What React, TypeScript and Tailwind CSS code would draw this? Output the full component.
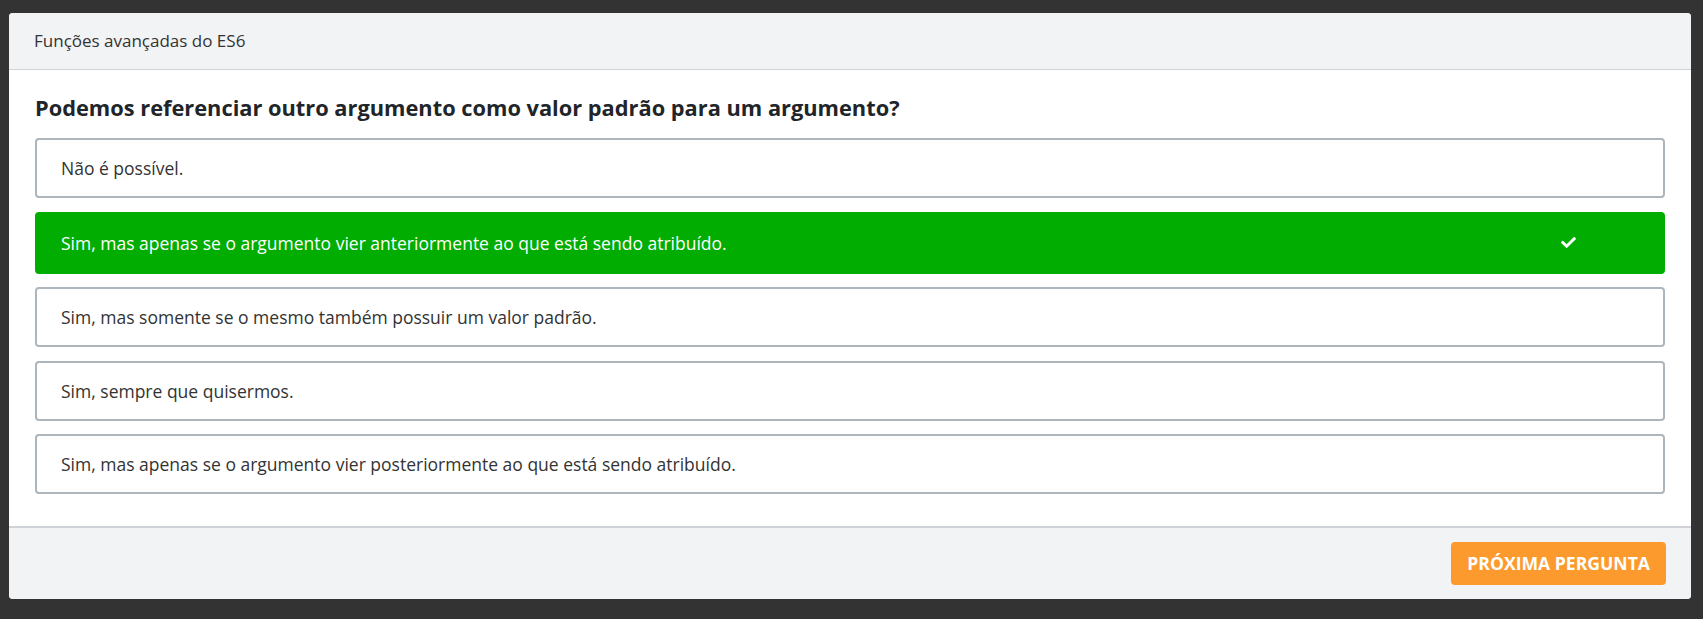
import { FaCheck } from "react-icons/fa";

const options = [
  { text: "Não é possível.", correct: false },
  { text: "Sim, mas apenas se o argumento vier anteriormente ao que está sendo atribuído.", correct: true },
  { text: "Sim, mas somente se o mesmo também possuir um valor padrão.", correct: false },
  { text: "Sim, sempre que quisermos.", correct: false },
  { text: "Sim, mas apenas se o argumento vier posteriormente ao que está sendo atribuído.", correct: false },
];

function Option({ text, correct }: { text: string; correct: boolean }) {
  if (correct) {
    return (
      <div className="flex h-[62px] items-center justify-between rounded-[4px] bg-[#00ad00] pl-[26px] pr-[89px] text-white">
        <span className="text-[17.5px] leading-[26px]">{text}</span>
        <FaCheck size={15} />
      </div>
    );
  }
  return (
    <div className="flex h-[60px] items-center rounded-[4px] border-2 border-[#adb5bd] bg-white pl-6 text-[#333]">
      <span className="text-[17.5px] leading-[26px]">{text}</span>
    </div>
  );
}

export default function App() {
  return (
    <div className="min-h-[619px] bg-[#333333] pt-[13px] font-['Open_Sans',sans-serif]">
      <div className="ml-[9px] w-[1682px] overflow-hidden rounded-[4px] bg-white">
        <div className="flex h-[57px] items-center border-b border-[#cfd2d6] bg-[#f2f3f5] px-[25px] text-[17px] leading-[26px] text-[#333]">
          Funções avançadas do ES6
        </div>

        <div className="px-[26px] pt-[25px] pb-[32px]">
          <h2 className="mb-[17px] text-[21.8px] font-bold leading-[26px] text-[#212529]">
            Podemos referenciar outro argumento como valor padrão para um argumento?
          </h2>
          <div className="flex flex-col gap-[13.5px]">
            {options.map((o) => (
              <Option key={o.text} {...o} />
            ))}
          </div>
        </div>

        <div className="flex justify-end border-t-2 border-[#cfd2d6] bg-[#f2f3f5] px-[25px] py-[14px]">
          <button className="h-[43px] rounded-[4px] bg-[#fd9a2e] px-4 text-[17.6px] font-bold text-white">
            PRÓXIMA PERGUNTA
          </button>
        </div>
      </div>
    </div>
  );
}
